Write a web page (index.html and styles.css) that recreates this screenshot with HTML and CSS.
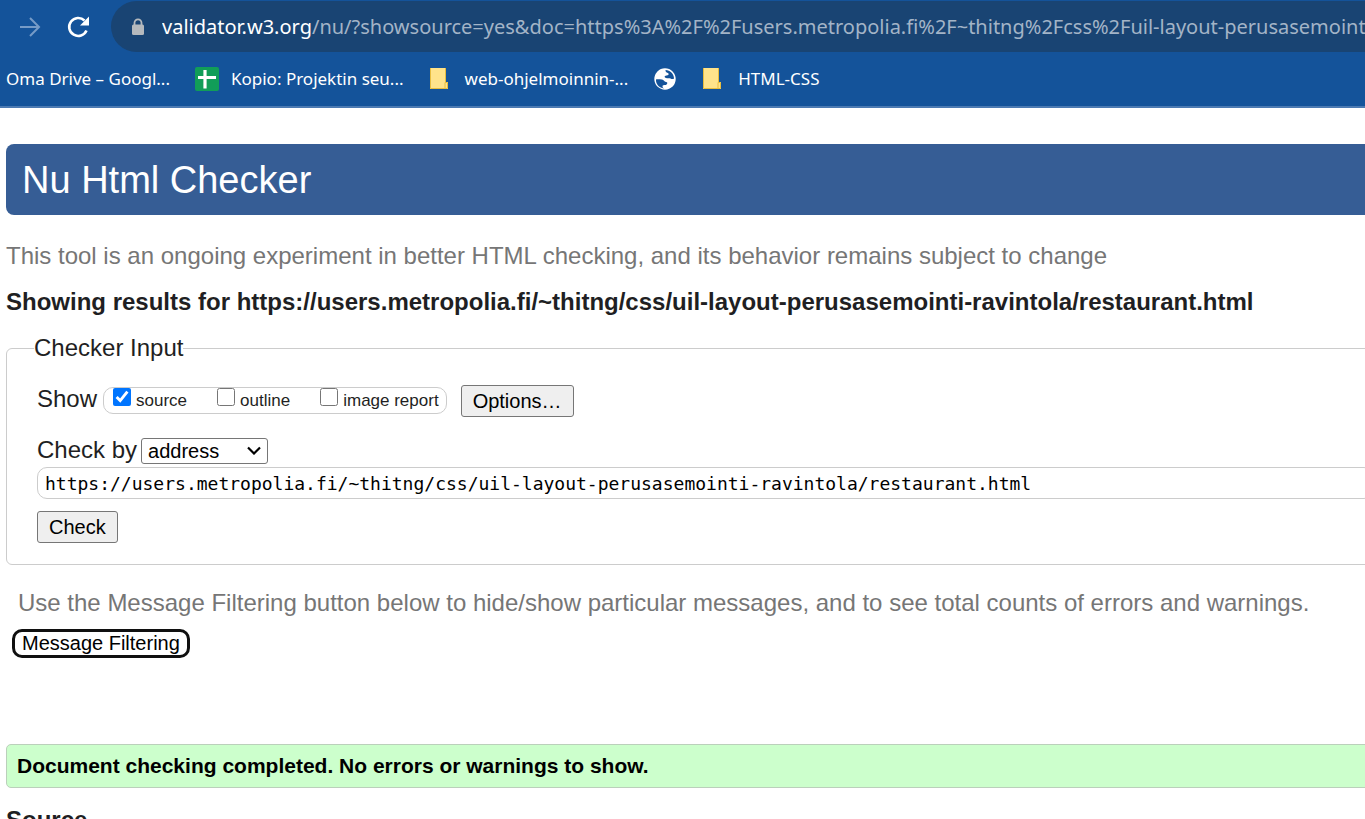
FILE: index.html
```html
<!DOCTYPE html>
<html lang="en">
<head>
<meta charset="utf-8">
<title>Nu Html Checker</title>
<link rel="stylesheet" href="styles.css">
</head>
<body>
<header class="browser">
  <div class="toolbar">
    <button class="nav-button nav-forward" type="button" aria-label="Forward">
      <svg width="22" height="22" viewBox="0 0 22 22" fill="none" stroke="currentColor" stroke-width="2"><path d="M1 11H20M11 2L20 11L11 20"/></svg>
    </button>
    <button class="nav-button" type="button" aria-label="Reload">
      <svg width="24" height="24" viewBox="0 0 24 24"><path d="M20.500 15.500A9 9 0 1 1 18.500 5.500" fill="none" stroke="currentColor" stroke-width="2.600"/><path d="M23 1.500V10.500H14Z" fill="currentColor"/></svg>
    </button>
    <div class="address-bar">
      <svg class="lock" width="14" height="18" viewBox="0 0 14 18"><path d="M3.500 7V4.800a3.500 3.500 0 0 1 7 0V7" fill="none" stroke="currentColor" stroke-width="1.800"/><rect x="1" y="6.500" width="12" height="10.500" rx="1.500" fill="currentColor"/></svg>
      <div class="url"><span class="url-host">validator.w3.org</span>/nu/?showsource=yes&amp;doc=https%3A%2F%2Fusers.metropolia.fi%2F~thitng%2Fcss%2Fuil-layout-perusasemointi</div>
    </div>
  </div>
  <nav class="bookmarks" aria-label="Bookmarks">
    <a class="bookmark" href="#">Oma Drive – Googl...</a>
    <a class="bookmark" href="#">
      <svg width="24" height="24" viewBox="0 0 24 24"><rect width="24" height="24" rx="2" fill="#119d58"/><path d="M3 10.500H21M10 3V21.500" stroke="#fff" stroke-width="3.200"/></svg>
      <span>Kopio: Projektin seu...</span>
    </a>
    <a class="bookmark" href="#">
      <svg width="24" height="24" viewBox="0 0 24 24"><path d="M1 1H17V15H19V22H1Z" fill="#ffe38b"/><path d="M1.500 1V21.500H18.500V15.500H16V21.500M16.500 1V15" fill="none" stroke="#e8bd3e"/></svg>
      <span>web-ohjelmoinnin-...</span>
    </a>
    <a class="bookmark" href="#" aria-label="Website">
      <svg width="24" height="24" viewBox="0 0 24 24"><circle cx="12" cy="12" r="10.700" fill="#fff"/><path d="M3 12.500C4 12 7 12.500 9 12.500C11 12.500 11 15 13 15C14.500 15 14.500 16 14 17C13 19 9.500 17 9.500 19.500C9.500 21 11 21.500 12 21.500C7 21.500 2.500 17.500 3 12.500ZM12.500 3C17 3 21 7 21 11.500C20 12.500 18.500 12 17.500 11.500C16 10.500 13.500 12 12 10.500C11 9.500 12 8.500 13.500 8.500C15 8.500 16 7.500 15.500 6.500C15 5.500 12.500 6 12.500 3Z" fill="#14539a"/></svg>
    </a>
    <a class="bookmark" href="#">
      <svg width="24" height="24" viewBox="0 0 24 24"><path d="M1 1H17V15H19V22H1Z" fill="#ffe38b"/><path d="M1.500 1V21.500H18.500V15.500H16V21.500M16.500 1V15" fill="none" stroke="#e8bd3e"/></svg>
      <span>HTML-CSS</span>
    </a>
  </nav>
</header>
<main class="page">
  <h1 class="title">Nu Html Checker</h1>
  <p class="intro">This tool is an ongoing experiment in better HTML checking, and its behavior remains subject to change</p>
  <h2 class="results-heading">Showing results for https://users.metropolia.fi/~thitng/css/uil-layout-perusasemointi-ravintola/restaurant.html</h2>
  <form>
    <fieldset class="checker">
      <legend>Checker Input</legend>
      <div class="row show-row">
        <span class="show-label">Show</span>
        <div class="checks">
          <label class="check"><input type="checkbox" checked>source</label>
          <label class="check"><input type="checkbox">outline</label>
          <label class="check"><input type="checkbox">image report</label>
        </div>
        <button class="button" type="button">Options…</button>
      </div>
      <div class="row method-row">
        <label for="method">Check by</label>
        <div class="select-wrap">
          <select id="method" class="method"><option>address</option><option>file upload</option><option>text input</option></select>
          <svg class="chevron" width="14" height="9" viewBox="0 0 14 9"><path d="M1 1.500L7 7.500L13 1.500" fill="none" stroke="#000" stroke-width="2.200"/></svg>
        </div>
      </div>
      <input class="doc" type="text" aria-label="Address" value="https://users.metropolia.fi/~thitng/css/uil-layout-perusasemointi-ravintola/restaurant.html">
      <button class="button" type="button">Check</button>
    </fieldset>
  </form>
  <section class="filtering">
    <p class="hint">Use the Message Filtering button below to hide/show particular messages, and to see total counts of errors and warnings.</p>
    <button class="filter-button" type="button">Message Filtering</button>
  </section>
  <p class="success">Document checking completed. No errors or warnings to show.</p>
  <h2 class="source-heading">Source</h2>
</main>
</body>
</html>
```
FILE: styles.css
```css
* {
  box-sizing: border-box;
}

body {
  height: 100vh;
  margin: 0;
  overflow: hidden;
  background: #fff;
  color: #1f1f23;
  font: 24px/28px "Liberation Sans", Arial, sans-serif;
}

h1, h2, p {
  margin: 0;
}

.browser {
  background: #14539a;
  border-bottom: 2px solid #4c7ab2;
  color: #fff;
  font-family: "Noto Sans", "Open Sans", sans-serif;
}

.toolbar {
  display: flex;
  align-items: center;
  padding: 1px 0 0 18px;
}

.nav-button {
  display: flex;
  align-items: center;
  justify-content: center;
  width: 24px;
  height: 24px;
  margin-right: 24px;
  padding: 0;
  border: 0;
  background: none;
  color: #fff;
}

.nav-forward {
  color: #769bc7;
}

.address-bar {
  display: flex;
  flex: 1;
  align-items: center;
  gap: 17px;
  min-width: 0;
  height: 51px;
  margin-left: -3px;
  padding-left: 20px;
  border-radius: 26px 0 0 26px;
  background: #194473;
  color: #a3b4c7;
}

.lock {
  flex: none;
  color: #b5b9bd;
}

.url {
  flex: 1;
  overflow: hidden;
  font-size: 20px;
  line-height: 30px;
  white-space: nowrap;
}

.url-host {
  color: #fff;
}

.bookmarks {
  display: flex;
  align-items: center;
  gap: 25px;
  height: 54px;
  padding-left: 6px;
}

.bookmark {
  display: flex;
  align-items: center;
  gap: 12px;
  color: #fff;
  font-size: 17px;
  line-height: 24px;
  text-decoration: none;
  white-space: nowrap;
}

/* The page is wider than the window, so its boxes run past the right edge. */
.page {
  width: calc(100% + 40px);
  padding: 36px 0 0 6px;
}

.title {
  padding: 13px 16px 11px;
  border-radius: 8px;
  background: #365d95;
  color: #fff;
  font-size: 38px;
  font-weight: 400;
  line-height: 47px;
}

.intro {
  margin-top: 27px;
  color: #767676;
}

.results-heading {
  margin-top: 18px;
  font-size: 24px;
  line-height: 28px;
}

.checker {
  min-width: 0;
  margin: 18px 0 0;
  padding: 22px 30px 21px;
  border: 1px solid #ccc;
  border-radius: 6px;
}

.checker legend {
  margin-left: -3px;
  padding: 0;
}

.row {
  display: flex;
  align-items: center;
}

.show-row {
  height: 34px;
}

.show-label {
  padding-bottom: 4px;
}

.checks {
  display: flex;
  gap: 30px;
  margin: 0 14px 2px 6px;
  padding: 0 7px 0 9px;
  border: 1px solid #ccc;
  border-radius: 10px;
}

.check {
  display: flex;
  gap: 5px;
  font-size: 17px;
  line-height: 25px;
}

.check input {
  width: 18px;
  height: 18px;
  margin: 0;
  accent-color: #0075ff;
}

.button {
  padding: 0 11px;
  border: 1px solid #767676;
  border-radius: 3px;
  background: #efefef;
  color: #000;
  font: 20px/30px "Liberation Sans", Arial, sans-serif;
}

.method-row {
  gap: 4px;
  margin-top: 18px;
}

.select-wrap {
  display: grid;
  align-items: center;
  padding-top: 1px;
}

.method,
.chevron {
  grid-area: 1 / 1;
}

.method {
  width: 127px;
  height: 26px;
  padding: 0 6px;
  border: 1px solid #767676;
  border-radius: 3px;
  appearance: none;
  background: #fff;
  color: #000;
  font: 20px/24px "Liberation Sans", Arial, sans-serif;
}

.chevron {
  justify-self: end;
  margin-right: 7px;
  pointer-events: none;
}

.doc {
  display: block;
  width: 100%;
  height: 32px;
  margin: 3px 0 12px;
  padding: 0 7px;
  border: 1px solid #ccc;
  border-radius: 10px;
  color: #000;
  font: 18px/30px "DejaVu Sans Mono", monospace;
}

.filtering {
  padding: 24px 0 0 6px;
}

.hint {
  padding-left: 6px;
  color: #767676;
}

.filter-button {
  display: block;
  margin-top: 12px;
  padding: 0 7px;
  border: 3px solid #101010;
  border-radius: 10px;
  background: #fff;
  color: #000;
  font: 20px/23px "Liberation Sans", Arial, sans-serif;
}

.success {
  margin-top: 86px;
  padding: 9px 10px;
  border: 1px solid #bbd0bb;
  border-radius: 5px;
  background: #cfc;
  color: #000;
  font-size: 21px;
  font-weight: 700;
  line-height: 24px;
}

.source-heading {
  margin-top: 18px;
  font-size: 24px;
  line-height: 28px;
}
```
